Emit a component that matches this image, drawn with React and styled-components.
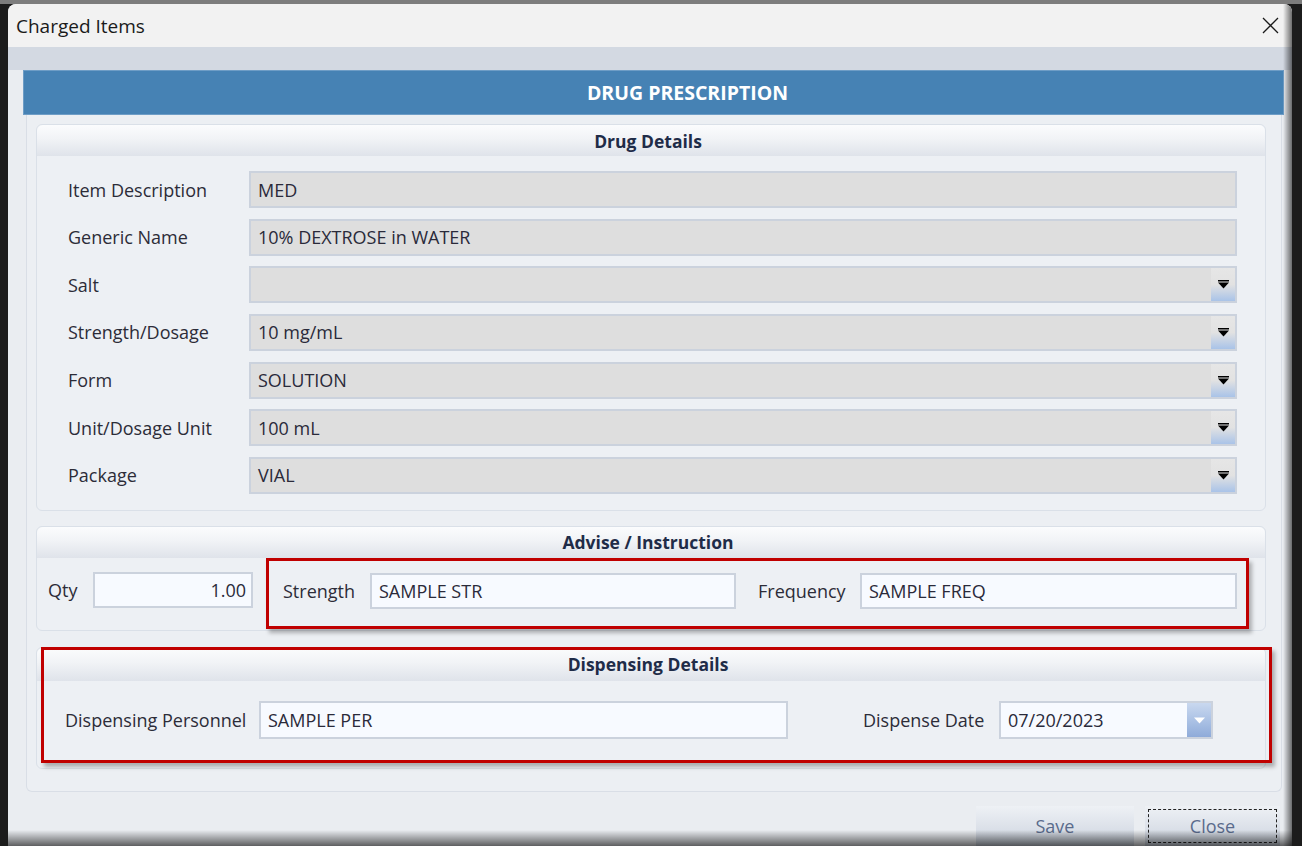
import React from 'react';
import styled, { createGlobalStyle } from 'styled-components';

const Global = createGlobalStyle`
  html, body { margin: 0; padding: 0; background: #1c1c1c; }
  body { width: 1302px; height: 846px; overflow: hidden; font-family: "Open Sans", "Noto Sans", sans-serif; }
  * { box-sizing: border-box; }
`;

const Screen = styled.div`
  width: 1302px;
  height: 846px;
  background: linear-gradient(#7d7d7d 0 4px, #1c1c1c 4px);
  padding: 4px 10px 0 8px;
  display: flex;
`;

const Window = styled.div`
  position: relative;
  flex: 1;
  height: 842px;
  background: #eaedf1;
  border-radius: 8px 8px 0 0;
  overflow: hidden;
  display: flex;
  flex-direction: column;
  &::after {
    content: "";
    position: absolute;
    inset: 0;
    pointer-events: none;
    background:
      linear-gradient(to right, transparent calc(100% - 9px), rgba(0,0,0,0.55)),
      linear-gradient(to bottom, transparent calc(100% - 16px), rgba(0,0,0,0.6));
  }
`;

const TitleBar = styled.div`
  height: 43px;
  flex: none;
  background: #f2f2f2;
  display: flex;
  align-items: center;
  justify-content: space-between;
  padding: 0 13px 0 8px;
  font-size: 19px;
  color: #1a1a1a;
`;

const TopBand = styled.div`
  height: 23px;
  flex: none;
  background: #d3d9e2;
`;

const Content = styled.div`
  display: flex;
  flex-direction: column;
  padding: 0 8px 0 15px;
`;

const Banner = styled.div`
  height: 45px;
  background: #4682b4;
  border: 1px solid #6e9dc6;
  color: #ffffff;
  font-weight: 700;
  font-size: 19.5px;
  display: flex;
  align-items: center;
  justify-content: center;
  padding-left: 68px;
`;

const OuterPanel = styled.div`
  margin: 0 2px 0 3px;
  border: 1px solid #d9dee6;
  border-top: none;
  border-radius: 0 0 6px 6px;
  background: #eceff3;
  padding: 9px 15px 22px 9px;
  display: flex;
  flex-direction: column;
`;

const Group = styled.div`
  position: relative;
  border: 1px solid #dae0e8;
  border-radius: 6px;
  background: #edf0f4;
  margin-top: ${p => p.$mt || 0}px;
`;

const GroupHeader = styled.div`
  height: ${p => p.$h || 31}px;
  border-radius: 6px 6px 0 0;
  background: linear-gradient(#fbfcfd, #f1f3f6 45%, #dfe3ea);
  display: flex;
  align-items: center;
  justify-content: center;
  padding-right: 6px;
  font-weight: 700;
  font-size: 17.5px;
  color: #1f2c48;
`;

const DetailGrid = styled.div`
  display: grid;
  grid-template-columns: 181px 1fr;
  grid-auto-rows: 37px;
  row-gap: 10.67px;
  padding: 15px 28px 16px 31px;
  align-items: center;
`;

const Label = styled.div`
  font-size: 18px;
  color: #2c2c38;
  white-space: nowrap;
  width: ${p => (p.$w ? `${p.$w}px` : 'auto')};
  flex: none;
`;

const Field = styled.div`
  height: ${p => p.$h || 37}px;
  width: ${p => (p.$w ? `${p.$w}px` : 'auto')};
  flex: ${p => (p.$w ? 'none' : '1')};
  border: 2px solid #cbd2dd;
  background: ${p => (p.$light ? '#f7faff' : '#dedede')};
  display: flex;
  align-items: center;
  justify-content: ${p => (p.$right ? 'flex-end' : 'flex-start')};
  padding: ${p => (p.$right ? '0 5px 0 0' : '0 0 0 7px')};
  font-size: 18px;
  color: #2a2a3a;
  white-space: nowrap;
  overflow: hidden;
`;

const FieldText = styled.span`
  flex: 1;
`;

const ComboButton = styled.div`
  width: 24px;
  align-self: stretch;
  flex: none;
  background: ${p => (p.$blue
    ? 'linear-gradient(#c9d8ef, #a9c0e4 55%, #8fabd9)'
    : 'linear-gradient(#e6e6e6, #e2e2e2 50%, #a9c3e8)')};
  display: flex;
  align-items: center;
  justify-content: center;
`;

const InstrRow = styled.div`
  display: flex;
  align-items: flex-start;
  padding: 0 0 2px 11px;
  height: 72px;
`;

const QtyBlock = styled.div`
  display: flex;
  align-items: center;
  margin-top: 14px;
`;

const RedBox = styled.div`
  display: flex;
  align-items: center;
  margin-left: 13px;
  width: 983px;
  height: 71px;
  border: 3px solid #c00000;
  box-shadow: 3px 4px 4px rgba(0, 0, 0, 0.28);
  padding: 0 9px 4px 14px;
`;

const Spacer = styled.div`
  width: ${p => p.$w}px;
  flex: none;
`;

const DispRow = styled.div`
  display: flex;
  align-items: center;
  padding: 20px 0 29px 28px;
`;

const RedOverlay = styled.div`
  position: absolute;
  top: -1px;
  left: 4px;
  right: -7px;
  bottom: 5px;
  border: 3px solid #c00000;
  box-shadow: 3px 4px 4px rgba(0, 0, 0, 0.28);
  pointer-events: none;
`;

const ButtonRow = styled.div`
  display: flex;
  justify-content: flex-end;
  gap: 11px;
  margin-top: 14px;
  padding-right: 4px;
`;

const Button = styled.div`
  width: ${p => p.$w}px;
  height: 40px;
  background: linear-gradient(#eef1f5, #dde2ea 50%, #cad2dd);
  display: flex;
  align-items: center;
  justify-content: center;
  font-size: 18px;
  color: #5a6b8c;
  outline: ${p => (p.$focus ? '1px dashed #222' : 'none')};
  outline-offset: -4px;
`;

const CloseIcon = () => (
  <svg width="17" height="17" viewBox="0 0 17 17">
    <path d="M1 1 L16 16 M16 1 L1 16" stroke="#1a1a1a" strokeWidth="1.3" fill="none" />
  </svg>
);

const Arrow = ({ color }) => (
  <svg width="11" height="9" viewBox="0 0 11 9">
    {color === '#000' && <rect x="0" y="0" width="11" height="1.5" fill="#000" />}
    <path d="M0 2.5 H11 L5.5 8.5 Z" fill={color} />
  </svg>
);

const details = [
  ['Item Description', 'MED', false],
  ['Generic Name', '10% DEXTROSE in WATER', false],
  ['Salt', '', true],
  ['Strength/Dosage', '10 mg/mL', true],
  ['Form', 'SOLUTION', true],
  ['Unit/Dosage Unit', '100 mL', true],
  ['Package', 'VIAL', true],
];

export default function App() {
  return (
    <>
      <Global />
      <Screen>
        <Window>
          <TitleBar>
            <span>Charged Items</span>
            <CloseIcon />
          </TitleBar>
          <TopBand />
          <Content>
            <Banner>DRUG PRESCRIPTION</Banner>
            <OuterPanel>
              <Group>
                <GroupHeader>Drug Details</GroupHeader>
                <DetailGrid>
                  {details.map(([label, value, combo]) => (
                    <React.Fragment key={label}>
                      <Label>{label}</Label>
                      <Field style={combo ? { paddingRight: 0 } : undefined}>
                        <FieldText>{value}</FieldText>
                        {combo && (
                          <ComboButton>
                            <Arrow color="#000" />
                          </ComboButton>
                        )}
                      </Field>
                    </React.Fragment>
                  ))}
                </DetailGrid>
              </Group>

              <Group $mt={15}>
                <GroupHeader>Advise / Instruction</GroupHeader>
                <InstrRow>
                  <QtyBlock>
                    <Label $w={45}>Qty</Label>
                    <Field $w={160} $h={36} $light $right>1.00</Field>
                  </QtyBlock>
                  <RedBox>
                    <Label $w={87}>Strength</Label>
                    <Field $w={366} $h={36} $light>SAMPLE STR</Field>
                    <Spacer $w={22} />
                    <Label $w={102}>Frequency</Label>
                    <Field $h={36} $light>SAMPLE FREQ</Field>
                  </RedBox>
                </InstrRow>
              </Group>

              <Group $mt={16}>
                <GroupHeader $h={33}>Dispensing Details</GroupHeader>
                <DispRow>
                  <Label $w={194}>Dispensing Personnel</Label>
                  <Field $w={529} $h={38} $light>SAMPLE PER</Field>
                  <Spacer $w={75} />
                  <Label $w={136}>Dispense Date</Label>
                  <Field $w={214} $h={38} $light style={{ paddingRight: 0 }}>
                    <FieldText>07/20/2023</FieldText>
                    <ComboButton $blue>
                      <Arrow color="#ffffff" />
                    </ComboButton>
                  </Field>
                </DispRow>
                <RedOverlay />
              </Group>
            </OuterPanel>
            <ButtonRow>
              <Button $w={158}>Save</Button>
              <Button $w={135} $focus>Close</Button>
            </ButtonRow>
          </Content>
        </Window>
      </Screen>
    </>
  );
}
